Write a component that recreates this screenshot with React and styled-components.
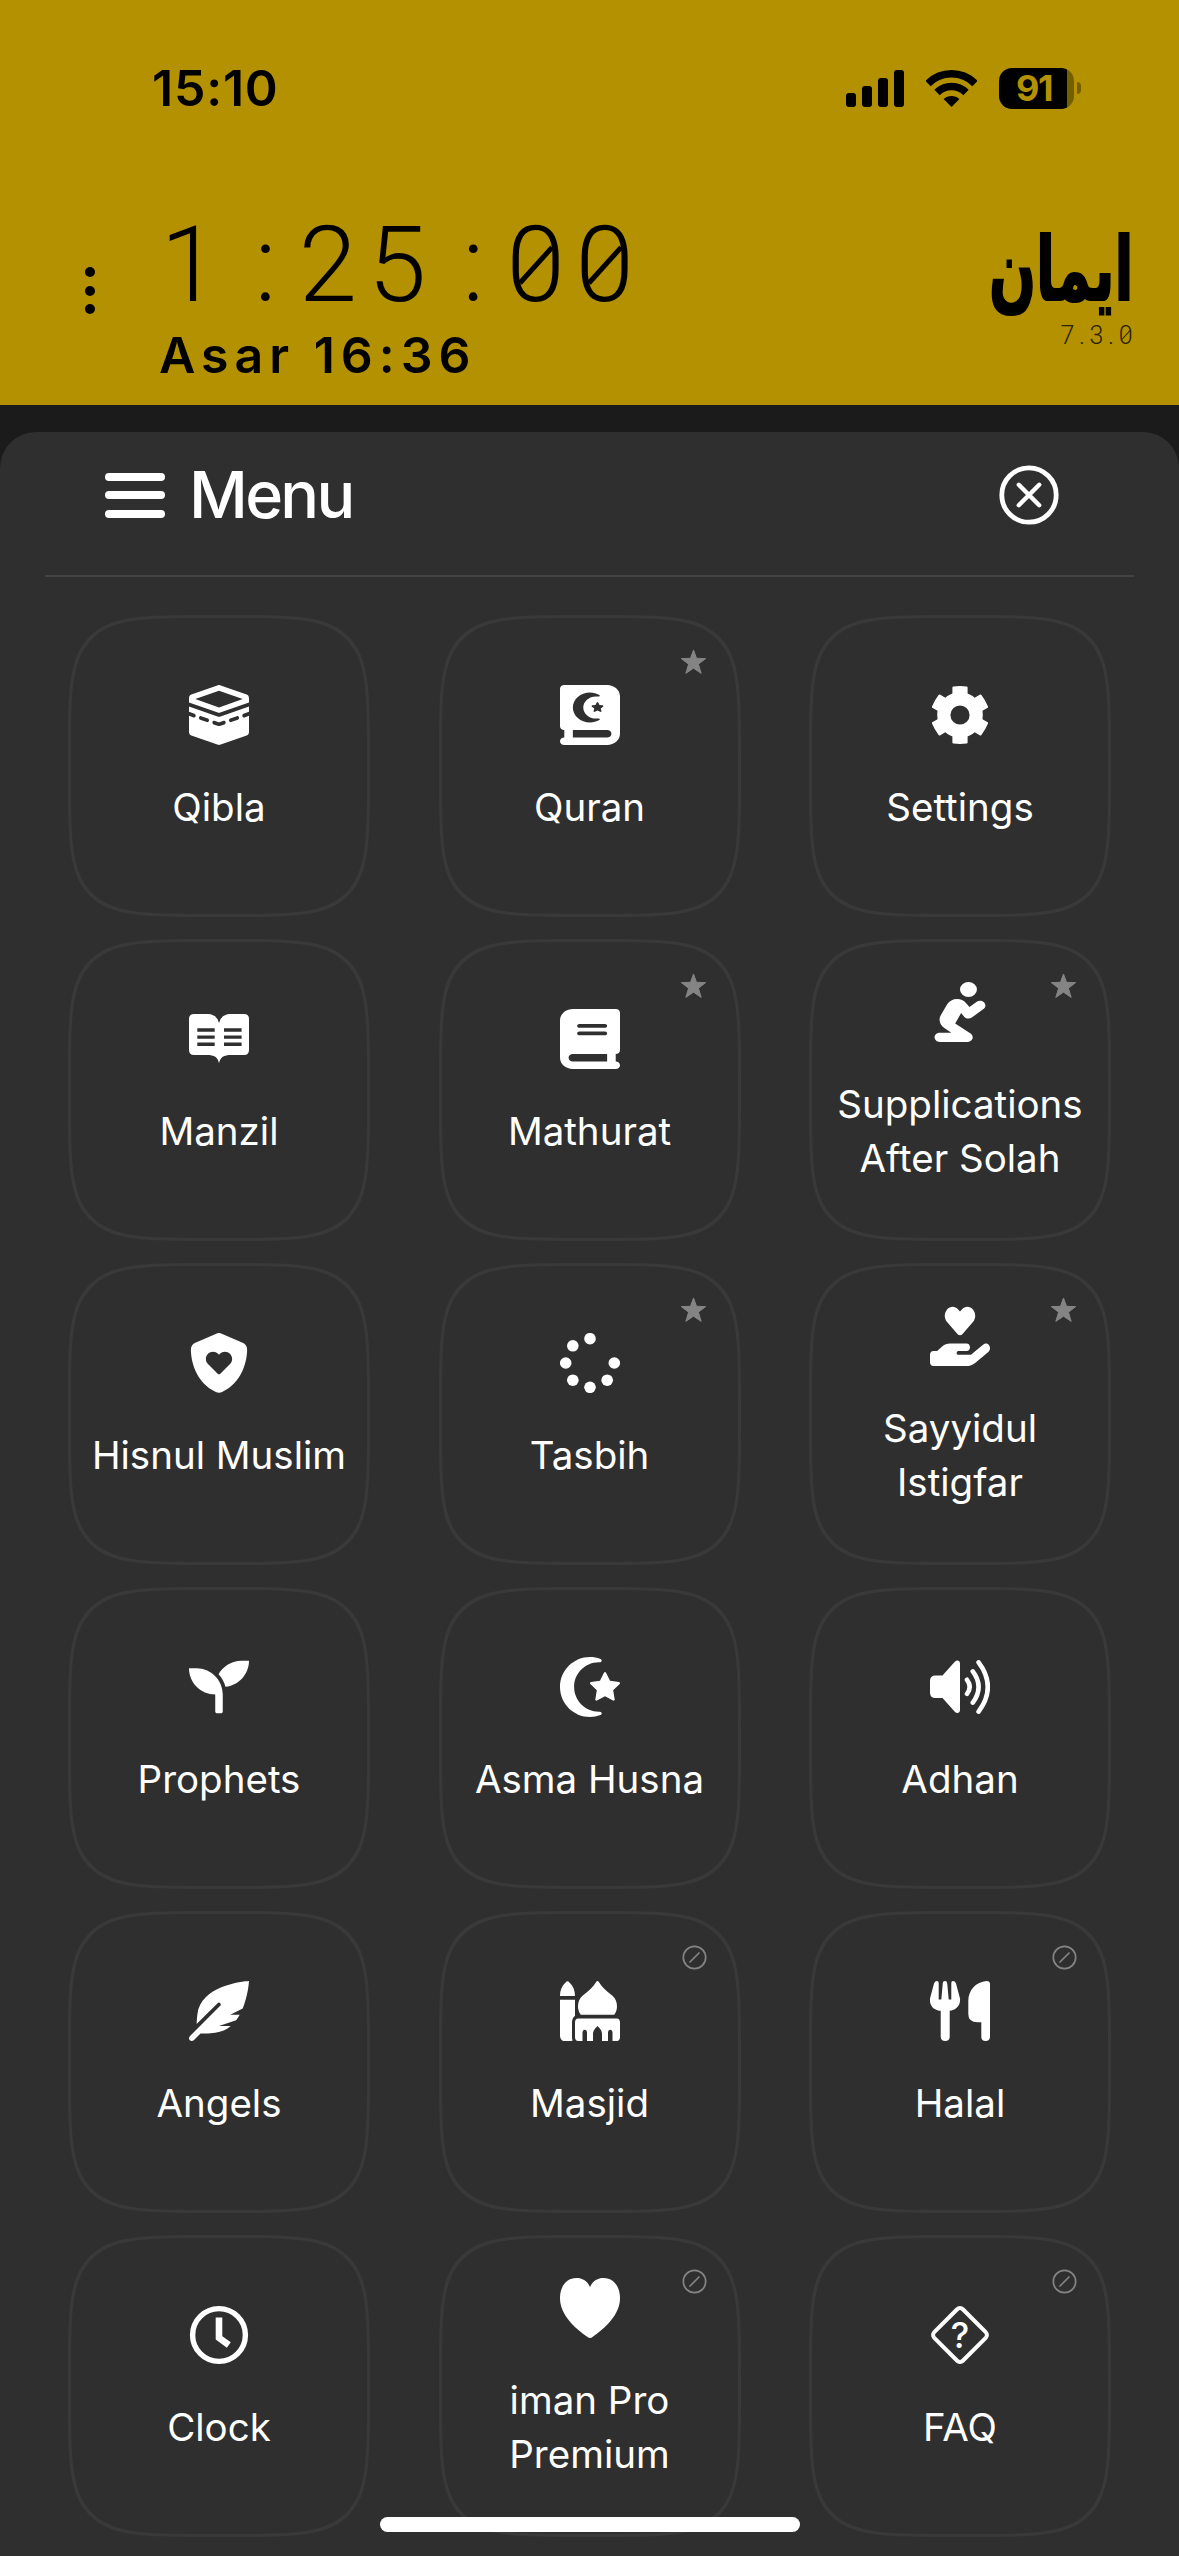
import styled, { createGlobalStyle } from "styled-components";
import {
  FaKaaba,
  FaBookQuran,
  FaBook,
  FaPersonPraying,
  FaShieldHeart,
  FaHandHoldingHeart,
  FaMosque,
} from "react-icons/fa6";
import { FaSeedling, FaStarAndCrescent, FaFeatherAlt } from "react-icons/fa";

const GlobalStyle = createGlobalStyle`
  * {
    box-sizing: border-box;
  }

  body {
    margin: 0;
    background-color: #1b1b1b;
    font-family: Inter, "Liberation Sans", sans-serif;
  }

  svg {
    display: block;
  }
`;

const Screen = styled.div`
  position: relative;
  width: 1179px;
  height: 2556px;
  overflow: hidden;
  display: flex;
  flex-direction: column;
  background-color: #1b1b1b;
`;

const Header = styled.header`
  height: 405px;
  flex-shrink: 0;
  background-color: #b49100;
  color: #000;
`;

const StatusBar = styled.div`
  height: 176px;
  padding: 0 98px 0 152px;
  display: flex;
  align-items: center;
  justify-content: space-between;
`;

const StatusTime = styled.span`
  font-size: 50px;
  font-weight: 600;
  letter-spacing: 0.8px;
`;

const StatusIcons = styled.div`
  display: flex;
  align-items: center;
  gap: 22px;
`;

const Battery = styled.div`
  display: flex;
  align-items: center;
  gap: 3px;

  .level {
    width: 75px;
    height: 41px;
    border-radius: 13px;
    background: linear-gradient(to right, #000 68px, rgba(0, 0, 0, 0.35) 68px);
    color: #b49100;
    font-size: 36px;
    font-weight: 700;
    line-height: 41px;
    letter-spacing: -1.5px;
    text-align: center;
    padding-right: 5px;
  }

  .nub {
    width: 4px;
    height: 12px;
    border-radius: 0 4px 4px 0;
    background-color: rgba(0, 0, 0, 0.35);
  }
`;

const Countdown = styled.div`
  height: 229px;
  padding: 0 46px 0 85px;
  display: flex;
`;

const Dots = styled.div`
  width: 10px;
  padding-top: 91px;
  display: flex;
  flex-direction: column;
  gap: 8.5px;

  span {
    width: 10px;
    height: 10px;
    border-radius: 50%;
    background-color: #000;
  }
`;

const Times = styled.div`
  flex: 1;
  padding: 37px 0 0 60px;
`;

const MonoRow = styled.div`
  display: flex;
  font-family: Roboto, sans-serif;
  font-weight: 300;
  font-size: ${({ $size }) => $size}px;
  line-height: 1;
`;

const MonoChar = styled.span`
  position: relative;
  width: ${({ $width }) => $width}px;
  text-align: center;

  &.colon {
    padding-left: 0.13em;
  }

  /* slash through the zero */
  &.zero::after {
    content: "";
    position: absolute;
    left: 50%;
    top: 49.5%;
    width: 0.46em;
    height: 0.045em;
    background-color: currentColor;
    transform: translate(-50%, -50%) rotate(-48deg);
  }
`;

const NextPrayer = styled.div`
  margin: 7px 0 0 4px;
  font-size: 50px;
  line-height: 60px;
  font-weight: 600;
  letter-spacing: 6px;
  white-space: nowrap;
`;

const Brand = styled.div`
  display: flex;
  flex-direction: column;
  align-items: flex-end;
  padding-top: 39px;

  .name {
    font-family: "DejaVu Sans", sans-serif;
    font-weight: 700;
    font-size: 80px;
    line-height: 110px;
    height: 108px;
    -webkit-text-stroke: 2px #000;
    transform: scale(0.69, 1.1);
    transform-origin: right center;
  }

  .version {
    color: #2a2200;
  }
`;

const Sheet = styled.main`
  flex: 1;
  margin-top: 27px;
  border-radius: 36px 36px 0 0;
  background-color: #2f2f2f;
  color: #fff;
`;

const SheetHeader = styled.div`
  height: 145px;
  margin: 0 45px;
  padding: 0 75px 17px 60px;
  border-bottom: 2px solid #434343;
  display: flex;
  align-items: center;

  h1 {
    flex: 1;
    margin: 0 0 0 24px;
    font-size: 64.5px;
    font-weight: 500;
    letter-spacing: -2.7px;
  }
`;

const Burger = styled.div`
  width: 60px;
  display: flex;
  flex-direction: column;
  gap: 10.5px;

  span {
    height: 8px;
    border-radius: 4px;
    background-color: #fff;
  }
`;

const Grid = styled.div`
  display: grid;
  grid-template-columns: repeat(3, 302px);
  column-gap: 68.5px;
  row-gap: 22px;
  padding: 38px 0 0 68px;
`;

const Card = styled.div`
  position: relative;
  height: 302px;
  padding-bottom: 14px;
  display: flex;
  flex-direction: column;
  align-items: center;
  justify-content: center;
  border: 3px solid #393939;
  border-radius: 80px;

  @supports (corner-shape: superellipse(2)) {
    border-radius: 50%;
    corner-shape: superellipse(2.17);
  }
`;

const IconBox = styled.div`
  width: 60px;
  height: 60px;
  margin-bottom: 35px;
  display: flex;
  align-items: center;
  justify-content: center;
`;

const Label = styled.div`
  font-size: 38.5px;
  line-height: 54px;
  text-align: center;
  white-space: pre-line;
`;

const Badge = styled.div`
  position: absolute;
  top: 30.5px;
  right: 31px;
  color: #848484;
`;

const HomeIndicator = styled.div`
  position: absolute;
  left: 380px;
  bottom: 24px;
  width: 420px;
  height: 15px;
  border-radius: 8px;
  background-color: #fff;
`;

const Praying = styled(FaPersonPraying)`
  transform: scaleX(1.13);
`;

const Signal = () => (
  <svg width="58" height="37" viewBox="0 0 58 37">
    <rect x="0" y="23" width="10" height="14" rx="3" />
    <rect x="16" y="16" width="10" height="21" rx="3" />
    <rect x="32" y="8" width="10" height="29" rx="3" />
    <rect x="48" y="0" width="10" height="37" rx="3" />
  </svg>
);

const Wifi = () => (
  <svg width="51" height="37" viewBox="0 0 51 37" fill="none" stroke="#000" strokeWidth="7.5">
    <path d="M2 13.5A33.3 33.3 0 0 1 49 13.5" />
    <path d="M11 22.5A20.5 20.5 0 0 1 40 22.5" />
    <path d="M25.5 37L17.6 29.1A11.4 11.4 0 0 1 33.4 29.1Z" fill="#000" stroke="none" />
  </svg>
);

const CloseIcon = () => (
  <svg width="60" height="60" viewBox="0 0 60 60" fill="none" stroke="#fff" strokeLinecap="round">
    <circle cx="30" cy="30" r="27.2" strokeWidth="4.8" />
    <path d="M19.8 19.8L40.2 40.2M40.2 19.8L19.8 40.2" strokeWidth="4.4" />
  </svg>
);

const Gear = () => (
  <svg width="60" height="60" viewBox="-30 -30 60 60" fill="#fff">
    <circle r="16.2" fill="none" stroke="#fff" strokeWidth="13.2" />
    {[0, 60, 120, 180, 240, 300].map((angle) => (
      <path
        key={angle}
        d="M-7.6 -17V-27.6Q-7.6 -28.4 -6.6 -28.5Q0 -29.4 6.6 -28.5Q7.6 -28.4 7.6 -27.6V-17Z"
        transform={`rotate(${angle})`}
      />
    ))}
  </svg>
);

const OpenBook = () => (
  <svg width="60" height="50" viewBox="0 0 60 50">
    <path
      fill="#fff"
      d="M5 0H19Q28 .5 30 9Q32 .5 41 0H55Q60 0 60 5V36Q60 41 55 41H42C35 41 31 43 30 49.5C29 43 25 41 18 41H5Q0 41 0 36V5Q0 0 5 0Z"
    />
    <path
      stroke="#2f2f2f"
      strokeWidth="3.4"
      d="M8.3 16H25.7M8.3 23.1H25.7M8.3 30.2H25.7M35 16H52.6M35 23.1H52.6M35 30.2H52.6"
    />
  </svg>
);

const Beads = () => (
  <svg width="60" height="60" viewBox="-30 -30 60 60" fill="#fff">
    {[0, 45, 90, 135, 180, 225, 270].map((angle) => (
      <circle key={angle} cx="24.3" r="5.8" transform={`rotate(${angle})`} />
    ))}
  </svg>
);

const Speaker = () => (
  <svg width="60" height="54" viewBox="0 0 60 54">
    <path
      fill="#fff"
      d="M5.5 15.5H12.5L25 1.6C27 -.4 30 .6 30 3.4V50C30 53 27 54 25 52L12.5 38H5.5Q0 38 0 32.5V21Q0 15.5 5.5 15.5Z"
    />
    <path
      fill="none"
      stroke="#fff"
      strokeWidth="4.6"
      strokeLinecap="round"
      d="M37 19.8Q42.4 26.8 37 33.8M42.8 11.4Q54.4 26.8 42.8 42.6M48.6 2.4Q67 26.8 48.6 51.6"
    />
  </svg>
);

const Cutlery = () => (
  <svg width="60" height="60" viewBox="0 0 60 60" fill="#fff">
    <path d="M4 2.4Q5 0 7 0Q8.7 0 8.7 2V18.4H11.3L12.8 2Q13 0 15 0T17.2 2L18.7 18.4H21.3V2Q21.3 0 23 0Q25 0 26 2.4L30 17.5C31 26 24 29.7 19.7 29.7V56Q19.5 60 15.2 60T10.7 56V29.7C6 29.7 -1 26 0 17.5Z" />
    <path d="M56.5 0Q60 0 60 3V56Q59.8 60 55.6 60T51.3 56V41.3H47.5Q38.3 41 38.3 33V20C38.3 9 46 1 56.5 0Z" />
  </svg>
);

const ClockFace = () => (
  <svg width="60" height="60" viewBox="-30 -30 60 60" fill="none" stroke="#fff">
    <circle r="26.4" strokeWidth="5.4" />
    <path d="M0 -17.6V2.8L9.8 10" strokeWidth="6.6" />
  </svg>
);

const Heart = () => (
  <svg width="60" height="60" viewBox="0 0 60 60" fill="#fff">
    <path d="M30 9C27 2.5 22 0 16.5 0C6 0 0 9 0 20C0 37 15 50 27.5 59Q30 60.8 32.5 59C45 50 60 37 60 20C60 9 54 0 43.5 0C38 0 33 2.5 30 9Z" />
  </svg>
);

const QuestionDiamond = () => (
  <svg width="60" height="60" viewBox="-30 -30 60 60">
    <rect
      x="-20.2"
      y="-20.2"
      width="40.4"
      height="40.4"
      rx="4"
      fill="none"
      stroke="#fff"
      strokeWidth="4"
      transform="rotate(45)"
    />
    <text y="12.8" textAnchor="middle" fontSize="35" fontWeight="500" fill="#fff">
      ?
    </text>
  </svg>
);

const StarMark = () => (
  <svg width="27" height="26" viewBox="0 0 27 26" fill="currentColor">
    <path
      d="M13.5 1L16.5 9.3L25.7 9.6L18.4 15.2L21.2 24.4L13.5 19.2L5.8 24.4L8.6 15.2L1.3 9.6L10.5 9.3Z"
      stroke="currentColor"
      strokeWidth="1"
      strokeLinejoin="round"
    />
  </svg>
);

const SlashCircle = () => (
  <svg width="25" height="25" viewBox="0 0 25 25" fill="none" stroke="currentColor" strokeWidth="1.7">
    <circle cx="12.5" cy="12.5" r="11.2" />
    <path d="M8 17L17 8" strokeLinecap="round" />
  </svg>
);

// fills the whole 60px square whatever the icon's own proportions
const stretch = { size: 60, preserveAspectRatio: "none" };

const items = [
  { label: "Qibla", icon: <FaKaaba {...stretch} /> },
  { label: "Quran", icon: <FaBookQuran {...stretch} />, badge: "star" },
  { label: "Settings", icon: <Gear /> },
  { label: "Manzil", icon: <OpenBook /> },
  { label: "Mathurat", icon: <FaBook {...stretch} />, badge: "star" },
  { label: "Supplications\nAfter Solah", icon: <Praying size={60} />, badge: "star" },
  { label: "Hisnul Muslim", icon: <FaShieldHeart size={60} /> },
  { label: "Tasbih", icon: <Beads />, badge: "star" },
  { label: "Sayyidul\nIstigfar", icon: <FaHandHoldingHeart {...stretch} />, badge: "star" },
  { label: "Prophets", icon: <FaSeedling size={60} /> },
  { label: "Asma Husna", icon: <FaStarAndCrescent size={60} /> },
  { label: "Adhan", icon: <Speaker /> },
  { label: "Angels", icon: <FaFeatherAlt size={60} /> },
  { label: "Masjid", icon: <FaMosque {...stretch} />, badge: "slash" },
  { label: "Halal", icon: <Cutlery />, badge: "slash" },
  { label: "Clock", icon: <ClockFace /> },
  { label: "iman Pro\nPremium", icon: <Heart />, badge: "slash" },
  { label: "FAQ", icon: <QuestionDiamond />, badge: "slash" },
];

const charClass = { 0: "zero", ":": "colon" };

const MonoText = ({ text, size, width, className }) => (
  <MonoRow $size={size} className={className}>
    {text.split("").map((char, i) => (
      <MonoChar key={i} $width={width} className={charClass[char]}>
        {char}
      </MonoChar>
    ))}
  </MonoRow>
);

const App = () => {
  return (
    <Screen>
      <GlobalStyle />
      <Header>
        <StatusBar>
          <StatusTime>15:10</StatusTime>
          <StatusIcons>
            <Signal />
            <Wifi />
            <Battery>
              <div className="level">91</div>
              <div className="nub" />
            </Battery>
          </StatusIcons>
        </StatusBar>
        <Countdown>
          <Dots>
            <span />
            <span />
            <span />
          </Dots>
          <Times>
            <MonoText text="1:25:00" size={105} width={69.2} />
            <NextPrayer>Asar 16:36</NextPrayer>
          </Times>
          <Brand>
            <div className="name" dir="rtl">ايمان</div>
            <MonoText text="7.3.0" size={25} width={14.6} className="version" />
          </Brand>
        </Countdown>
      </Header>

      <Sheet>
        <SheetHeader>
          <Burger>
            <span />
            <span />
            <span />
          </Burger>
          <h1>Menu</h1>
          <CloseIcon />
        </SheetHeader>
        <Grid>
          {items.map(({ label, icon, badge }) => (
            <Card key={label}>
              <IconBox>{icon}</IconBox>
              <Label>{label}</Label>
              {badge && <Badge>{badge === "star" ? <StarMark /> : <SlashCircle />}</Badge>}
            </Card>
          ))}
        </Grid>
      </Sheet>
      <HomeIndicator />
    </Screen>
  );
};

export default App;
